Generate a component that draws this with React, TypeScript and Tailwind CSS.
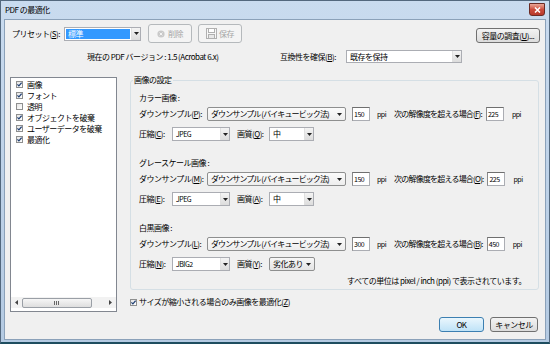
import React from "react";

function Arrow() {
  return (
    <svg width="5" height="3" viewBox="0 0 5 3" className="shrink-0">
      <path d="M0 0H5L2.5 3Z" fill="#222" />
    </svg>
  );
}

function FieldCombo({
  className,
  children,
  selected,
}: {
  className: string;
  children: React.ReactNode;
  selected?: boolean;
}) {
  return (
    <div className={`flex items-stretch border border-[#abadb3] bg-white ${className}`}>
      <div className="flex min-w-0 flex-1 items-center p-[1px]">
        {selected ? (
          <div className="flex h-full flex-1 items-center bg-[#3399ff] pl-[2px] text-white">{children}</div>
        ) : (
          <div className="whitespace-nowrap pl-[2px]">{children}</div>
        )}
      </div>
      <div className="flex w-[9px] items-center justify-center border-l border-[#e0e0e0] bg-gradient-to-b from-[#f4f4f4] to-[#dcdcdc]">
        <Arrow />
      </div>
    </div>
  );
}

function ButtonCombo({ className, children }: { className: string; children: React.ReactNode }) {
  return (
    <div
      className={`flex h-[14px] items-center overflow-hidden rounded-[2px] border border-[#8e8f8f] bg-gradient-to-b from-[#f7f7f7] to-[#e4e4e4] pl-[3px] pr-[3px] ${className}`}
    >
      <span className="min-w-0 flex-1 overflow-hidden whitespace-nowrap">{children}</span>
      <span className="ml-[2px]">
        <Arrow />
      </span>
    </div>
  );
}

function NumInput({ value }: { value: string }) {
  return (
    <div className="flex h-[14px] w-[18px] items-center border border-[#abadb3] border-l-[#8a8a8a] border-t-[#6f6f6f] bg-white pl-[1px] text-[7px]">
      {value}
    </div>
  );
}

function Check({ checked }: { checked: boolean }) {
  return (
    <span className="flex h-[7px] w-[7px] shrink-0 items-center justify-center border border-[#8e8f8f] bg-gradient-to-br from-[#e4e4e4] to-white">
      {checked && (
        <svg width="5" height="5" viewBox="0 0 5 5">
          <path d="M0.4 2.4L1.9 3.9L4.6 0.7" stroke="#1f3f73" strokeWidth="1.2" fill="none" />
        </svg>
      )}
    </span>
  );
}

function DownRow({
  k1,
  res,
  k2,
  over,
}: {
  k1: string;
  res: string;
  k2: string;
  over: string;
}) {
  return (
    <div className="mt-[4px] flex h-[14px] items-center">
      <div className="w-[68px] whitespace-nowrap">
        ダウンサンプル(<u>{k1}</u>):
      </div>
      <ButtonCombo className="w-[139px] bg-gradient-to-b from-[#fbfbfb] to-[#ededed] tracking-[-0.9px]">
        ダウンサンプル (バイキュービック法)
      </ButtonCombo>
      <div className="ml-[6px]">
        <NumInput value={res} />
      </div>
      <div className="ml-[7px] text-[7px]">ppi</div>
      <div className="ml-[8px] whitespace-nowrap tracking-[-0.8px]">
        次の解像度を超える場合(<u>{k2}</u>):
      </div>
      <div className="ml-[4px]">
        <NumInput value={over} />
      </div>
      <div className="ml-[8px] text-[7px]">ppi</div>
    </div>
  );
}

function CompRow({
  k1,
  comp,
  k2,
  quality,
  qButton,
}: {
  k1: string;
  comp: string;
  k2: string;
  quality: string;
  qButton?: boolean;
}) {
  return (
    <div className="mt-[6px] flex h-[14px] items-center">
      <div className="w-[33px] whitespace-nowrap">
        圧縮(<u>{k1}</u>):
      </div>
      <FieldCombo className="h-[14px] w-[58px]">
        <span className="text-[7px]">{comp}</span>
      </FieldCombo>
      <div className="ml-[7px] w-[32px] whitespace-nowrap">
        画質(<u>{k2}</u>):
      </div>
      {qButton ? (
        <ButtonCombo className="w-[46px]">{quality}</ButtonCombo>
      ) : (
        <FieldCombo className="h-[14px] w-[45px]">{quality}</FieldCombo>
      )}
    </div>
  );
}

export default function App() {
  const items: [string, boolean][] = [
    ["画像", true],
    ["フォント", true],
    ["透明", false],
    ["オブジェクトを破棄", true],
    ["ユーザーデータを破棄", true],
    ["最適化", true],
  ];
  return (
    <div className="flex h-[344px] w-[550px] flex-col border border-b-[2px] border-[#53687e] border-b-[#1e4d5f] bg-gradient-to-b from-[#c9dbef] to-[#b4cae2] font-['Noto_Sans_CJK_JP','Noto_Sans',sans-serif] text-[8px] leading-[10px] tracking-[-0.5px] text-black">
      {/* title bar */}
      <div className="flex h-[18px] shrink-0 items-start">
        <div className="mt-[4px] pl-[4px]">PDF の最適化</div>
        <div className="ml-auto mr-[4px] mt-[2px] flex h-[13px] w-[16px] items-center justify-center rounded-b-[3px] border border-[#6b2b25] bg-gradient-to-b from-[#e9a698] via-[#cc4c3d] to-[#b8392b]">
          <svg width="7" height="6" viewBox="0 0 7 6">
            <path d="M1 0.5L6 5.5M6 0.5L1 5.5" stroke="#fff" strokeWidth="1.5" />
          </svg>
        </div>
      </div>
      {/* client */}
      <div className="mx-[3px] mb-[2px] flex flex-1 flex-col border border-[#8ba1b9] bg-[#f0f0f0]">
        {/* row 1 */}
        <div className="mt-[4px] flex h-[19px] items-center pl-[7px] pr-[5px]">
          <div className="w-[52px] whitespace-nowrap">
            プリセット(<u>S</u>):
          </div>
          <FieldCombo className="h-[14px] w-[77px]" selected>
            標準
          </FieldCombo>
          <div className="ml-[7px] flex h-[19px] w-[44px] items-center justify-center gap-[3px] rounded-[3px] border border-[#b5b9bc] bg-[#f4f4f4] text-[#a5a5a5]">
            <svg width="8" height="8" viewBox="0 0 8 8">
              <circle cx="4" cy="4" r="3.6" fill="#c9c9c9" />
              <path d="M2.6 2.6L5.4 5.4M5.4 2.6L2.6 5.4" stroke="#f4f4f4" strokeWidth="1" />
            </svg>
            <span>削除</span>
          </div>
          <div className="ml-[6px] flex h-[19px] w-[44px] items-center justify-center gap-[2px] rounded-[3px] border border-[#b5b9bc] bg-[#f4f4f4] text-[#a5a5a5]">
            <svg width="11" height="11" viewBox="0 0 11 11">
              <rect x="0.5" y="0.5" width="10" height="10" fill="#f7f7f7" stroke="#b0b0b0" />
              <rect x="2.5" y="0.5" width="6" height="4" fill="#fff" stroke="#b0b0b0" />
              <rect x="2.5" y="6.5" width="6" height="4" fill="#e8e8e8" stroke="#b0b0b0" />
            </svg>
            <span>保存</span>
          </div>
          <div className="ml-auto flex h-[15px] w-[64px] items-center justify-center self-end whitespace-nowrap rounded-[3px] border border-[#707070] bg-gradient-to-b from-[#f3f3f3] to-[#dcdcdc]">
            容量の調査(<u>U</u>)...
          </div>
        </div>
        {/* row 2 */}
        <div className="mt-[7px] flex h-[13px] items-center">
          <div className="w-[275px] whitespace-nowrap pl-[82px]">現在の PDF バージョン : 1.5 (Acrobat 6.x)</div>
          <div className="w-[66px] whitespace-nowrap">
            互換性を確保(<u>B</u>):
          </div>
          <FieldCombo className="h-[13px] w-[116px]">既存を保持</FieldCombo>
        </div>
        {/* main */}
        <div className="mt-[14px] flex items-start pl-[5px]">
          {/* list */}
          <div className="flex h-[235px] w-[107px] flex-col border border-[#828790] bg-white">
            <div className="flex flex-col pl-[5px] pt-[1px]">
              {items.map(([t, c]) => (
                <div key={t} className="flex h-[11px] items-center gap-[4px] whitespace-nowrap">
                  <Check checked={c} />
                  <span>{t}</span>
                </div>
              ))}
            </div>
            <div className="flex-1" />
            <div className="mb-[3px] flex h-[11px] items-center bg-[#f2f2f2]">
              <div className="flex w-[11px] items-center justify-center">
                <svg width="3" height="5" viewBox="0 0 3 5">
                  <path d="M3 0V5L0 2.5Z" fill="#444" />
                </svg>
              </div>
              <div className="flex h-[10px] w-[70px] items-center justify-center rounded-[2px] border border-[#9a9fa6] bg-gradient-to-b from-[#f6f6f6] to-[#dedede]">
                <svg width="6" height="4" viewBox="0 0 6 4">
                  <path d="M0.5 0V4M2.5 0V4M4.5 0V4" stroke="#666" strokeWidth="1" />
                </svg>
              </div>
              <div className="flex-1" />
              <div className="flex w-[11px] items-center justify-center">
                <svg width="3" height="5" viewBox="0 0 3 5">
                  <path d="M0 0V5L3 2.5Z" fill="#444" />
                </svg>
              </div>
            </div>
          </div>
          {/* right column */}
          <div className="ml-[13px] flex w-[409px] flex-col">
            <div className="relative mt-[3px] flex h-[210px] flex-col rounded-[3px] border border-[#d5dfe5] pl-[8px] pr-[12px] pt-[12px]">
              <div className="absolute left-[2px] top-[-6px] bg-[#f0f0f0] px-[1px]">画像の設定</div>
              <div className="h-[10px] whitespace-nowrap">カラー画像 :</div>
              <DownRow k1="P" res="150" k2="F" over="225" />
              <CompRow k1="C" comp="JPEG" k2="Q" quality="中" />
              <div className="mt-[17px] h-[10px] whitespace-nowrap">グレースケール画像 :</div>
              <DownRow k1="M" res="150" k2="O" over="225" />
              <CompRow k1="E" comp="JPEG" k2="A" quality="中" />
              <div className="mt-[17px] h-[10px] whitespace-nowrap">白黒画像 :</div>
              <DownRow k1="L" res="300" k2="B" over="450" />
              <CompRow k1="N" comp="JBIG2" k2="Y" quality="劣化あり" qButton />
              <div className="mt-[5px] h-[10px] self-end whitespace-nowrap">
                すべての単位は pixel / inch (ppi) で表示されています。
              </div>
            </div>
            <div className="mt-[7px] flex h-[10px] items-center gap-[2px] whitespace-nowrap">
              <Check checked />
              <span>
                サイズが縮小される場合のみ画像を最適化(<u>Z</u>)
              </span>
            </div>
          </div>
        </div>
        {/* buttons */}
        <div className="mt-[5px] flex justify-end pr-[7px]">
          <div className="flex h-[15px] w-[45px] items-center justify-center rounded-[3px] border border-[#3c7fb1] bg-gradient-to-b from-[#eaf6fd] to-[#bfe3f7]">
            OK
          </div>
          <div className="ml-[6px] flex h-[15px] w-[48px] items-center justify-center rounded-[3px] border border-[#707070] bg-gradient-to-b from-[#f3f3f3] to-[#dcdcdc]">
            キャンセル
          </div>
        </div>
      </div>
    </div>
  );
}
